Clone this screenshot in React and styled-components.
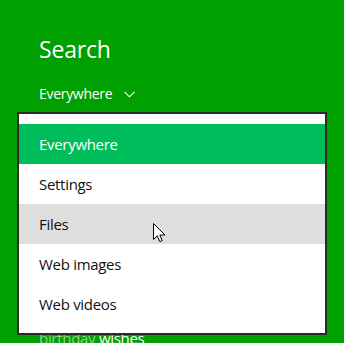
import React from 'react';
import styled, { createGlobalStyle } from 'styled-components';

const GlobalStyle = createGlobalStyle`
  html, body {
    margin: 0;
    padding: 0;
    background: #00a000;
    overflow: hidden;
  }
`;

const Page = styled.div`
  position: relative;
  width: 344px;
  height: 343px;
  padding: 34px 0 0 39px;
  box-sizing: border-box;
  font-family: "Open Sans", "Noto Sans", sans-serif;
  color: #fff;
`;

const Title = styled.h1`
  margin: 0;
  font-size: 23px;
  font-weight: 400;
  line-height: 30px;
  letter-spacing: -0.2px;
`;

const Scope = styled.div`
  display: flex;
  align-items: center;
  gap: 12px;
  margin-top: 20px;
  font-size: 14px;
  line-height: 20px;
  letter-spacing: -0.3px;
`;

// suggestion list sits underneath the open scope menu; only its bottom peeks out
const Suggestions = styled.div`
  display: flex;
  flex-direction: column;
  margin-top: 214px;
`;

const Suggestion = styled.div`
  font-size: 15px;
  line-height: 40px;
  letter-spacing: -0.3px;
  color: #fff;

  span {
    color: rgba(255, 255, 255, 0.55);
  }
`;

const Menu = styled.ul`
  position: absolute;
  top: 112px;
  left: 17px;
  width: 306px;
  margin: 0;
  padding: 10px 0 9px;
  list-style: none;
  background: #fff;
  border: 2px solid #2b2b2b;
`;

const Item = styled.li`
  height: 40px;
  display: flex;
  align-items: center;
  padding-left: 20px;
  font-size: 15px;
  letter-spacing: -0.3px;
  color: ${p => (p.$selected ? '#fff' : '#111')};
  background: ${p => (p.$selected ? '#00bd5b' : p.$hover ? '#dedede' : 'transparent')};
`;

const Pointer = styled.svg`
  position: absolute;
  top: 223px;
  left: 153px;
`;

const Chevron = () => (
  <svg width="11" height="7" viewBox="0 0 11 7">
    <path d="M0.5 0.8 L5.5 5.8 L10.5 0.8" fill="none" stroke="#fff" strokeWidth="1.1" />
  </svg>
);

const options = ['Everywhere', 'Settings', 'Files', 'Web images', 'Web videos'];

const App = () => {
  return (
    <Page>
      <GlobalStyle />
      <Title>Search</Title>
      <Scope>
        Everywhere
        <Chevron />
      </Scope>

      <Suggestions>
        <Suggestion><span>birthday</span> wishes</Suggestion>
      </Suggestions>

      <Menu>
        {options.map((o, i) => (
          <Item key={o} $selected={i === 0} $hover={o === 'Files'}>{o}</Item>
        ))}
      </Menu>

      <Pointer width="13" height="20" viewBox="0 0 13 20">
        <path
          d="M0.5 0.5 L0.5 16.5 L4.3 12.8 L6.8 18.6 L9.2 17.6 L6.8 12 L12 12 Z"
          fill="#fff"
          stroke="#000"
          strokeWidth="1"
          strokeLinejoin="miter"
        />
      </Pointer>
    </Page>
  );
};

export default App;
